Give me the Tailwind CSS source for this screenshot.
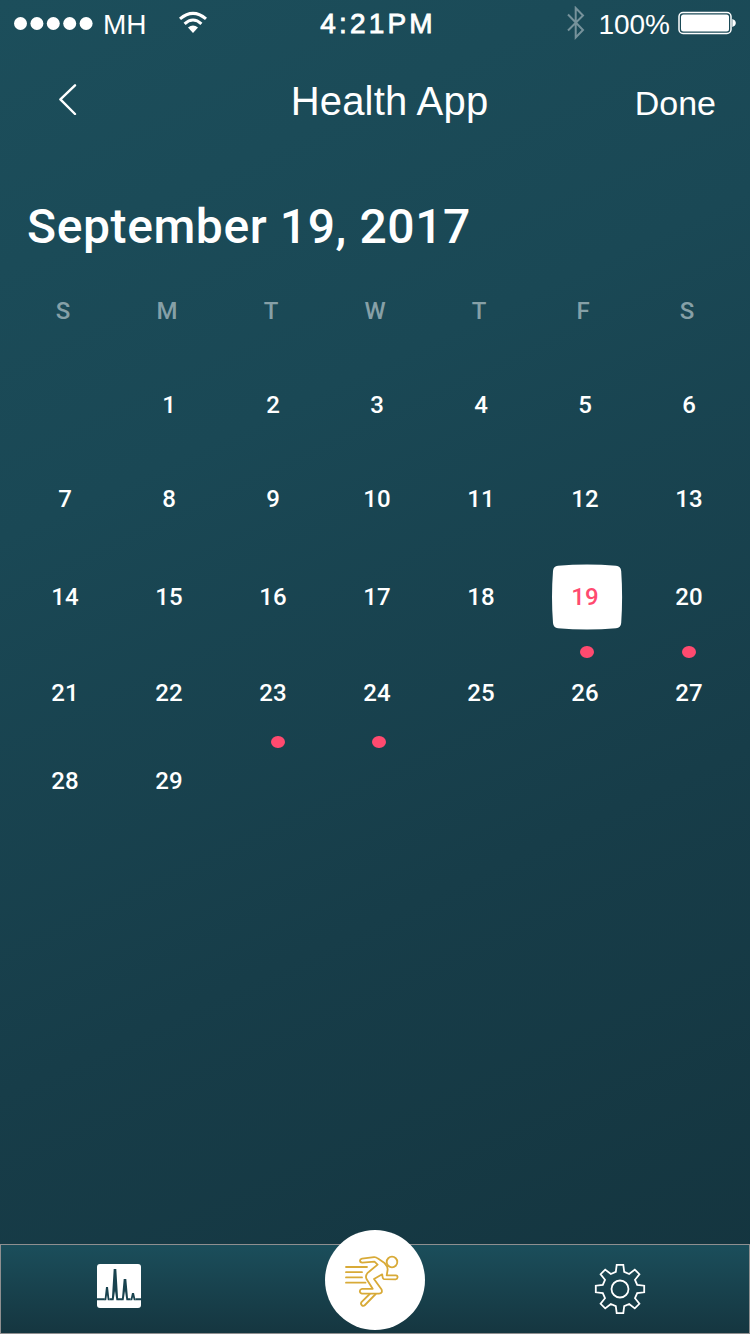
<!DOCTYPE html>
<html lang="en">
<head>
<meta charset="utf-8">
<title>Health App</title>
<script src="https://cdn.jsdelivr.net/npm/@tailwindcss/browser@4"></script>
</head>
<body class="w-[750px] h-[1334px] overflow-hidden flex flex-col text-white bg-[linear-gradient(155deg,#1c4e5b_0%,#1a4855_32%,#173d49_65%,#14343e_100%)] font-['Liberation_Sans',sans-serif]">
  <header class="shrink-0">
    <div class="h-12 grid grid-cols-3 text-[28px] leading-[50px] whitespace-nowrap">
      <div class="flex items-center pl-[14px]">
        <svg class="w-[80px] h-[14px] -mt-0.5" viewBox="0 0 80 14" fill="currentColor">
          <circle cx="6.5" cy="6.5" r="6.5"/><circle cx="22.9" cy="6.5" r="6.5"/><circle cx="39.3" cy="6.5" r="6.5"/><circle cx="55.7" cy="6.5" r="6.5"/><circle cx="72.1" cy="6.5" r="6.5"/>
        </svg>
        <span class="ml-[9px] w-[76px]">MH</span>
        <svg class="w-7 h-6 -mt-1" viewBox="0 0 28 24" fill="none" stroke="currentColor" stroke-width="3.1">
          <path d="M1 7.9Q14-3.2 27 7.9"/><path d="M5.6 12.8Q14 5.2 22.4 12.8"/><path d="M9 16.4Q14 12.4 19 16.4L14 22Z" fill="currentColor" stroke="none"/>
        </svg>
      </div>
      <div class="-mt-px text-center tracking-[3.2px] pl-[6px] [-webkit-text-stroke:0.8px_white]">4:21PM</div>
      <div class="flex items-center justify-end pr-[14px]">
        <svg class="w-[18px] h-[34px] mr-[13px] -mt-1" viewBox="0 0 18 34" fill="none" stroke="#76929b" stroke-width="2">
          <path d="M1 8.5L16 24L8.7 31.5V2L16 9.5L1 24.5"/>
        </svg>
        <span class="mr-2">100%</span>
        <svg class="w-[58px] h-6 -mt-1" viewBox="0 0 58 24">
          <rect x="1" y="1.6" width="52" height="20.8" rx="4" fill="none" stroke="white" stroke-width="1.5"/>
          <rect x="3" y="3.6" width="48" height="16.8" rx="2.5" fill="white"/>
          <path d="M54.3 8q3.5 1.2 3.5 4t-3.5 4z" fill="white"/>
        </svg>
      </div>
    </div>
    <nav class="h-[102px] grid grid-cols-3 whitespace-nowrap">
      <div class="pl-[58px] pt-[35px]">
        <svg class="w-5 h-8" viewBox="0 0 20 32" fill="none" stroke="currentColor" stroke-width="2.4" stroke-linecap="round" stroke-linejoin="round"><path d="M17 2.3L2.4 16.4L17 31"/></svg>
      </div>
      <h1 class="text-[40px] leading-[40px] pt-[33px] pl-[29px] text-center tracking-[0.2px]">Health App</h1>
      <div class="text-[34px] leading-[40px] pt-[35px] text-right pr-[34px]">Done</div>
    </nav>
  </header>
  <main class="grow font-['Roboto',sans-serif] font-medium">
    <h2 class="h-[134px] pt-[49px] pl-[27px] text-5xl leading-[56px] tracking-[0.6px]">September 19, 2017</h2>
    <div class="ml-[11px] w-[728px] grid grid-cols-7 text-center text-2xl leading-[54px] h-14 text-[#86a0a7]">
      <span>S</span><span>M</span><span>T</span><span>W</span><span>T</span><span>F</span><span>S</span>
    </div>
    <div class="ml-[13px] w-[728px] grid grid-cols-7 grid-rows-[94px_94px_102px_90px_86px] pt-[18px] text-center text-2xl items-center">
      <span class="col-start-2">1</span><span>2</span><span>3</span><span>4</span><span>5</span><span>6</span>
      <span>7</span><span>8</span><span>9</span><span>10</span><span>11</span><span>12</span><span>13</span>
      <span>14</span><span>15</span><span>16</span><span>17</span><span>18</span>
      <span class="relative isolate text-[#ff4a6f]">
        <svg class="absolute -z-10 left-[18px] -top-[17px] w-[72px] h-[66px]" viewBox="0 0 72 66"><path d="M7 1.8Q36-.8 65 1.8Q69.7 2 70.2 7Q72 33 70.2 59Q69.8 64 65 64.2Q36 66.8 7 64.2Q2.5 64 2 59Q0 33 2 7Q2.4 2 7 1.8Z" fill="white"/></svg>
        19
        <i class="absolute left-[47px] top-[65px] w-[13.5px] h-3 rounded-[50%] bg-[#ff4a6f]"></i>
      </span>
      <span class="relative">20<i class="absolute left-[45px] top-[65px] w-[13.5px] h-3 rounded-[50%] bg-[#ff4a6f]"></i></span>
      <span>21</span><span>22</span>
      <span class="relative">23<i class="absolute left-[50px] top-[59px] w-[13.5px] h-3 rounded-[50%] bg-[#ff4a6f]"></i></span>
      <span class="relative">24<i class="absolute left-[47px] top-[59px] w-[13.5px] h-3 rounded-[50%] bg-[#ff4a6f]"></i></span>
      <span>25</span><span>26</span><span>27</span>
      <span>28</span><span>29</span>
    </div>
  </main>
  <footer class="relative shrink-0 h-[90px] border border-[#8f8f90] bg-linear-to-b from-[#1b4e5b] to-[#153640] flex justify-between items-start">
    <svg class="w-11 h-11 ml-24 mt-[19px]" viewBox="0 0 44 44">
      <rect width="44" height="44" rx="3" fill="white"/>
      <path d="M0 35.3H7.8M12.4 35.3H15M21 35.3H25M31 35.3H33.6M38.4 35.3H44" stroke="#19434f" stroke-width="2"/>
      <path d="M7.5 36.3L9 23H11L12.5 36.3H10.8L10 31L9.2 36.3ZM14.8 36.3L16.7 5H19.3L21.2 36.3H19.4L18 27L16.6 36.3ZM24.8 36.3L26.7 15H29.3L31.2 36.3H29.4L28 27L26.6 36.3ZM33.4 36.3L35 29H37L38.6 36.3H36.8L36 33L35.2 36.3Z" fill="#19434f"/>
    </svg>
    <svg class="w-[52px] h-[52px] mr-[103px] mt-[18px]" viewBox="-26 -26 52 52" fill="none" stroke="white" stroke-width="1.8">
      <path d="M-4.2-17.2L-3.3-24.2H3.3L4.2-17.2L9.2-15L14.8-19.4L19.4-14.8L15-9.2L17.2-4.2L24.2-3.3V3.3L17.2 4.2L15 9.2L19.4 14.8L14.8 19.4L9.2 15L4.2 17.2L3.3 24.2H-3.3L-4.2 17.2L-9.2 15L-14.8 19.4L-19.4 14.8L-15 9.2L-17.2 4.2L-24.2 3.3V-3.3L-17.2-4.2L-15-9.2L-19.4-14.8L-14.8-19.4L-9.2-15Z"/>
      <circle r="8.5"/>
    </svg>
    <div class="absolute left-[324px] -top-[15px] w-[100px] h-[100px] rounded-full bg-white">
      <svg class="w-full h-full" viewBox="0 0 100 100" fill="none" stroke="#d8aa37" stroke-width="1.8" stroke-linejoin="round" stroke-linecap="round">
        <circle cx="67" cy="32" r="5.3"/>
        <path d="M21 37H42M21 42.2H37M21 47.4H37M21 52.7H40.5"/>
        <path d="M37.3 32.6Q35.1 32.4 35 30.6Q35 29 37 28.6L49 27.2Q51 27 53 28.6L59.5 33Q63 36.6 62.6 40L61.7 45.3L70.8 45.3Q72.6 45.5 72.6 47.3Q72.5 49.1 70.7 49.3L59 49.1Q57.8 48.8 57.6 47.2L57.2 44.3L49 49L56.6 59.5Q57.8 63.4 54 63.6L37 63.6Q34.8 63.2 34.8 61Q35 59 37 58.8L47.7 58.8L41.5 49Q40.4 46.6 41.6 44.5Q42.2 43 44 41.8L52.6 34.6L49.5 31.7Z"/>
        <path d="M44.7 64L36.7 71.8Q35.2 73.8 36.8 75.2Q38.4 76.6 40 75L50.7 64"/>
      </svg>
    </div>
  </footer>
</body>
</html>
